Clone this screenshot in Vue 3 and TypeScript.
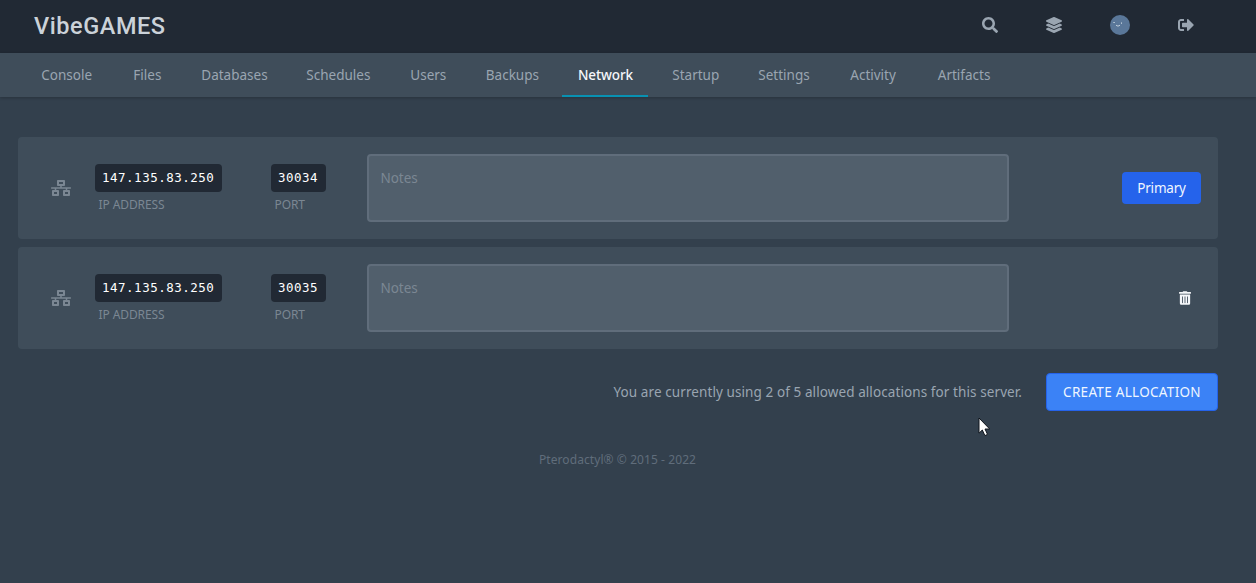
<script setup lang="ts">
import { ref } from 'vue'

interface Allocation {
  ip: string
  port: number
  primary: boolean
  notes: string
}

const tabs: string[] = [
  'Console', 'Files', 'Databases', 'Schedules', 'Users', 'Backups',
  'Network', 'Startup', 'Settings', 'Activity', 'Artifacts',
]
const activeTab = ref('Network')

const allocations = ref<Allocation[]>([
  { ip: '147.135.83.250', port: 30034, primary: true, notes: '' },
  { ip: '147.135.83.250', port: 30035, primary: false, notes: '' },
])
const limit = 5
</script>

<template>
  <div class="page">
    <header class="topbar">
      <div class="brand">VibeGAMES</div>
      <div class="actions">
        <svg class="icon" viewBox="0 0 512 512"><path d="M505 442.700L405.300 343c-4.500-4.500-10.600-7-17-7H372c27.600-35.300 44-79.700 44-128C416 93.100 322.900 0 208 0S0 93.100 0 208s93.100 208 208 208c48.300 0 92.700-16.400 128-44v16.300c0 6.400 2.500 12.500 7 17l99.700 99.700c9.400 9.400 24.600 9.400 33.900 0l28.300-28.300c9.400-9.400 9.400-24.600.1-34zM208 336c-70.700 0-128-57.200-128-128 0-70.700 57.200-128 128-128 70.700 0 128 57.200 128 128 0 70.700-57.200 128-128 128z" /></svg>
        <svg class="icon" viewBox="0 0 512 512"><path d="M12.410 148.020l232.940 105.670c6.800 3.090 14.490 3.090 21.290 0l232.940-105.670c16.550-7.510 16.550-32.520 0-40.030L266.650 2.310a25.607 25.607 0 0 0-21.290 0L12.410 107.980c-16.550 7.510-16.550 32.530 0 40.040zm487.180 88.280l-58.090-26.330-161.640 73.270c-7.560 3.430-15.590 5.170-23.860 5.170s-16.290-1.740-23.860-5.170L70.510 209.970l-58.100 26.330c-16.550 7.500-16.550 32.500 0 40l232.940 105.590c6.800 3.080 14.490 3.080 21.290 0L499.590 276.300c16.550-7.500 16.550-32.500 0-40zm0 127.800l-57.870-26.230-161.860 73.370c-7.560 3.430-15.590 5.170-23.860 5.170s-16.290-1.740-23.860-5.170L70.290 337.870 12.410 364.100c-16.550 7.500-16.550 32.500 0 40l232.940 105.590c6.800 3.080 14.490 3.080 21.290 0L499.590 404.100c16.550-7.500 16.550-32.500 0-40z" /></svg>
        <svg class="avatar" viewBox="0 0 20 20">
          <circle cx="10" cy="10" r="10" fill="#5a7799" />
          <path d="M3.200 7.500h1.800M11.500 7.300v1.700" stroke="#b9c8d6" stroke-width="0.900" fill="none" />
          <path d="M6 10.200q2 2 4 0" stroke="#c3d0dc" stroke-width="1" fill="none" />
        </svg>
        <svg class="icon" viewBox="0 0 512 512"><path d="M497 273L329 441c-15 15-41 4.500-41-17v-96H152c-13.300 0-24-10.700-24-24v-96c0-13.300 10.700-24 24-24h136V88c0-21.400 25.900-32 41-17l168 168c9.300 9.400 9.300 24.600 0 34zM192 436v-40c0-6.600-5.400-12-12-12H96c-17.700 0-32-14.300-32-32V160c0-17.700 14.300-32 32-32h84c6.600 0 12-5.400 12-12V76c0-6.600-5.400-12-12-12H96c-53 0-96 43-96 96v192c0 53 43 96 96 96h84c6.600 0 12-5.400 12-12z" /></svg>
      </div>
    </header>

    <nav class="tabs">
      <a v-for="tab in tabs" :key="tab" class="tab" :class="{ active: tab === activeTab }" @click="activeTab = tab">{{ tab }}</a>
    </nav>

    <main class="content">
      <section v-for="a in allocations" :key="a.port" class="row">
        <svg class="wired" viewBox="0 0 640 512"><path d="M640 264v-16c0-8.840-7.160-16-16-16H344v-40h72c17.670 0 32-14.330 32-32V32c0-17.670-14.330-32-32-32H224c-17.670 0-32 14.330-32 32v128c0 17.670 14.330 32 32 32h72v40H16c-8.840 0-16 7.160-16 16v16c0 8.840 7.160 16 16 16h104v40H64c-17.670 0-32 14.330-32 32v128c0 17.670 14.330 32 32 32h160c17.670 0 32-14.330 32-32V352c0-17.670-14.330-32-32-32h-56v-40h304v40h-56c-17.670 0-32 14.330-32 32v128c0 17.670 14.330 32 32 32h160c17.670 0 32-14.330 32-32V352c0-17.670-14.330-32-32-32h-56v-40h104c8.840 0 16-7.160 16-16zM256 128V64h128v64H256zm-64 320H96v-64h96v64zm352 0h-96v-64h96v64z" /></svg>
        <div class="field address">
          <code>{{ a.ip }}</code>
          <span class="label">IP ADDRESS</span>
        </div>
        <div class="field port">
          <code>{{ a.port }}</code>
          <span class="label">PORT</span>
        </div>
        <textarea v-model="a.notes" class="notes" placeholder="Notes"></textarea>
        <div class="end">
          <button v-if="a.primary" class="primary">Primary</button>
          <button v-else class="trash" aria-label="Delete">
            <svg viewBox="0 0 448 512"><path d="M32 464a48 48 0 0 0 48 48h288a48 48 0 0 0 48-48V128H32zm272-256a16 16 0 0 1 32 0v224a16 16 0 0 1-32 0zm-96 0a16 16 0 0 1 32 0v224a16 16 0 0 1-32 0zm-96 0a16 16 0 0 1 32 0v224a16 16 0 0 1-32 0zM432 32H312l-9.400-18.700A24 24 0 0 0 281.100 0H166.800a23.720 23.720 0 0 0-21.400 13.300L136 32H16A16 16 0 0 0 0 48v32a16 16 0 0 0 16 16h416a16 16 0 0 0 16-16V48a16 16 0 0 0-16-16z" /></svg>
          </button>
        </div>
      </section>

      <div class="summary">
        <p>You are currently using {{ allocations.length }} of {{ limit }} allowed allocations for this server.</p>
        <button class="create">CREATE ALLOCATION</button>
      </div>
    </main>

    <footer class="footer">Pterodactyl® © 2015 - 2022</footer>

    <svg class="pointer" viewBox="0 0 13 20">
      <path d="M1 1V16.200L4.300 13L6.900 18.600L9.500 17.400L7 12H11.700Z" fill="#fff" stroke="#10151c" stroke-width="1" />
    </svg>
  </div>
</template>

<style>
html,
body {
  margin: 0;
  background: #33404d;
}
</style>

<style scoped>
.page {
  position: relative;
  height: 583px;
  overflow: hidden;
  background: #33404d;
  font-family: 'Noto Sans', 'Open Sans', sans-serif;
}
.page * {
  box-sizing: border-box;
}
button {
  font-family: inherit;
  padding: 0;
  border: 0;
  color: #eff6ff;
  white-space: nowrap;
}
.topbar {
  display: flex;
  align-items: center;
  justify-content: space-between;
  height: 53px;
  padding: 0 62px 3px 34px;
  background: #212934;
}
.brand {
  font-family: Roboto, sans-serif;
  font-weight: 500;
  font-size: 23.5px;
  line-height: 32px;
  letter-spacing: 0.56px;
  color: #cbd2d9;
  padding-top: 2px;
}
.actions {
  display: flex;
  align-items: center;
}
.icon {
  width: 16px;
  height: 16px;
  fill: #9aa5b1;
  margin-right: 48px;
}
.icon:last-child {
  margin-right: 0;
}
.avatar {
  width: 20px;
  height: 20px;
  margin-right: 48px;
}
.tabs {
  display: grid;
  grid-template-columns: 84px 60px 97px 96px 67.500px 84.500px 86px 78px 84px 79.500px 85px;
  column-gap: 8px;
  height: 44px;
  padding-left: 25px;
  background: #3f4d5a;
  box-shadow: 0 1px 3px rgba(0, 0, 0, 0.22);
}
.tab {
  height: 44px;
  padding-left: 16.300px;
  font-size: 13.500px;
  line-height: 44px;
  letter-spacing: 0;
  color: #9aa5b1;
  white-space: nowrap;
}
.tab.active {
  padding-left: 16px;
  color: #f5f7fa;
  font-weight: 500;
  letter-spacing: -0.120px;
  box-shadow: inset 0 -2px #0891b2;
}
.content {
  width: 1200px;
  margin: 40px 0 0 18px;
}
.row {
  display: flex;
  align-items: center;
  height: 102px;
  margin-bottom: 8px;
  padding: 0 17px 0 33px;
  border-radius: 4px;
  background: #3f4d5a;
}
.wired {
  width: 20px;
  height: 16px;
  fill: #7b8793;
}
.field {
  display: flex;
  flex-direction: column;
  align-items: flex-start;
}
.address {
  width: 176px;
  margin-left: 24px;
}
.port {
  width: 96px;
}
.address code {
  width: 127px;
}
.port code {
  width: 55px;
}
code {
  height: 28px;
  padding: 0 7px;
  border-radius: 4px;
  background: #212934;
  color: #ffffff;
  font-family: 'DejaVu Sans Mono', monospace;
  font-size: 12.500px;
  line-height: 27px;
  letter-spacing: 0.500px;
}
.label {
  margin: 4px 0 -1px 3.500px;
  font-size: 12px;
  line-height: 17px;
  padding-bottom: 1px;
  letter-spacing: -0.100px;
  color: #7b8793;
}
.notes {
  display: block;
  width: 642px;
  height: 68px;
  padding: 12px 11.500px;
  border: 2px solid #606d7b;
  border-radius: 4px;
  background: #515f6c;
  color: #cbd2d9;
  font-family: inherit;
  font-size: 13.500px;
  line-height: 20px;
  letter-spacing: -0.050px;
  resize: none;
  outline: none;
}
.notes::placeholder {
  color: #7b8793;
  opacity: 1;
}
.end {
  display: flex;
  flex: 1;
  justify-content: flex-end;
}
.primary {
  width: 79px;
  height: 32px;
  border-radius: 4px;
  background: #2563eb;
  font-size: 13.500px;
  letter-spacing: -0.200px;
}
.trash {
  display: flex;
  width: 12px;
  height: 14px;
  margin-right: 10px;
  background: transparent;
}
.trash svg {
  width: 12px;
  height: 14px;
  fill: #f5f7fa;
}
.summary {
  display: flex;
  align-items: center;
  justify-content: flex-end;
  height: 38px;
  margin-top: 24px;
}
.summary p {
  margin: 0 24px 0 0;
  font-size: 13.500px;
  letter-spacing: 0.090px;
  color: #9aa5b1;
  white-space: nowrap;
}
.create {
  width: 172px;
  height: 38px;
  border: 1px solid #2563eb;
  border-radius: 4px;
  background: #3b82f6;
  font-size: 13.500px;
  letter-spacing: 0.300px;
}
.footer {
  width: 1235px;
  margin-top: 40px;
  text-align: center;
  font-size: 12px;
  line-height: 18px;
  letter-spacing: 0.080px;
  color: #606d7b;
}
.pointer {
  position: absolute;
  left: 978px;
  top: 417px;
  width: 13px;
  height: 20px;
}
</style>
